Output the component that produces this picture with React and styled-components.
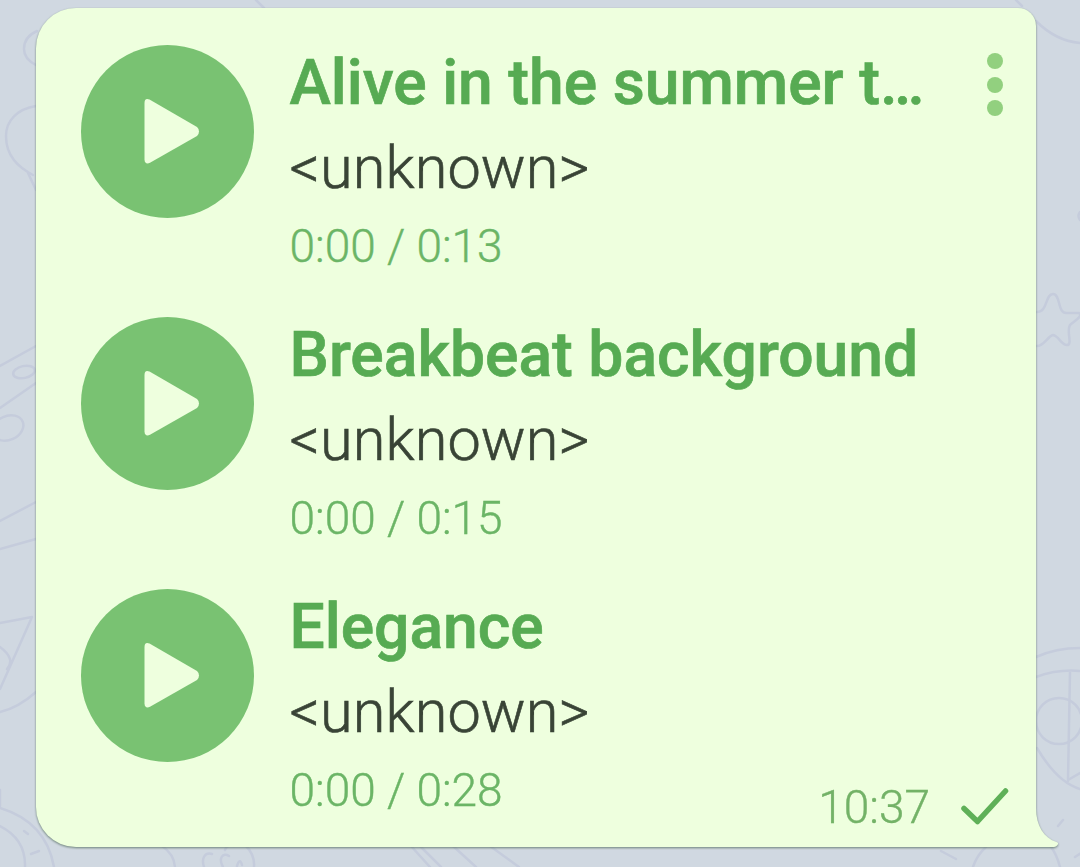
import React from "react";
import styled, { createGlobalStyle } from "styled-components";

const tracks = [
  { title: "Alive in the summer t…", artist: "<unknown>", time: "0:00 / 0:13" },
  { title: "Breakbeat background", artist: "<unknown>", time: "0:00 / 0:15" },
  { title: "Elegance", artist: "<unknown>", time: "0:00 / 0:28" },
];

const Wallpaper = () => (
  <WallpaperSvg viewBox="0 0 1080 867" aria-hidden="true">
    {/* left side */}
    <path d="M37 31c-9 4-13 10-13 18 0 6 4 12 12 16" />
    <path d="M36 106C17 109 6 121 6 136c0 20 12 31 27 39M28 173l8 17" />
    <path d="M0 366l36-20M0 408l36-25M0 521l36-19M0 549l36-10" />
    <ellipse cx="24" cy="372" rx="11" ry="6" transform="rotate(-12 24 372)" />
    <ellipse cx="8" cy="428" rx="16" ry="12" transform="rotate(-24 8 428)" />
    <path d="M0 623l32-6L0 689M0 647q16 12 7 22M0 712q18-4 36-20" />
    <path d="M0 808q46 14 54 59M0 826q26 13 25 41M0 806V790" />
    <path d="M24 831l4 3M31 854l8-3" />
    {/* top and right side */}
    <path d="M256 0l8 8M1016 0l6 6M1036 21q20 20 44 22" />
    <path d="M1080 212q-3 4 0 8" />
    <path d="M1037 312c11 0 8-18 16-18s4 20 14 19l12 0c4 3-3 7-9 12-4 6 3 20-3 20s-8-9-14-10c-5 1-9 11-16 11" />
    <path d="M1036 657q20-9 44-9M1036 677q22-8 44-6M1070 672l-2 109M1037 748q20 34 43 41M1068 780l12-7" />
    <circle cx="1059" cy="721" r="23" />
    <path d="M1058 826l5-6M1075 857l6-4" />
    {/* bottom edge */}
    <path d="M162 846q12 8 13 21M246 846q9 9 8 21M204 867c-3-9 1-15 8-13M223 867c-5-9 0-15 6-11M237 866q3-9 5-1M225 850q2-6 9-4" />
    <path d="M411 846l19 21M420 846l21 21M453 846l23 21M490 846l29 21" />
    <path d="M941 851l15 8M973 867q4-12 13-20M1051 847q6 8 9 20" />
  </WallpaperSvg>
);

const App = () => {
  return (
    <>
      <GlobalStyle />
      <Chat>
        <Wallpaper />
        <Bubble>
          {tracks.map((track) => (
            <Track key={track.title}>
              <PlayButton aria-label="Play">
                <svg width="173" height="173" viewBox="0 0 173 173">
                  <path d="M68.500 54.500Q63.500 52.500 63.500 58V114.500Q64 120 69 117.800L116 91Q118 89.500 118 86.500Q118 83.500 116 82Z" />
                </svg>
              </PlayButton>
              <Info>
                <Title>{track.title}</Title>
                <Artist>{track.artist}</Artist>
                <Time>{track.time}</Time>
              </Info>
            </Track>
          ))}
          <MenuButton aria-label="More">
            <Dot />
            <Dot />
            <Dot />
          </MenuButton>
          <Status>
            <span>10:37</span>
            <svg width="50" height="40" viewBox="0 0 50 40">
              <path d="M4 21.500L17.500 34.500L45.500 4" />
            </svg>
          </Status>
          <Tail viewBox="0 0 25 50">
            <path d="M0 0H1V10C1 28 9 40 21.500 44Q24 45 22.500 47Q21 49 19 49H0Z" />
          </Tail>
        </Bubble>
      </Chat>
    </>
  );
};

export default App;

const GlobalStyle = createGlobalStyle`
  * {
    box-sizing: border-box;
  }
  body {
    margin: 0;
    overflow: hidden;
    font-family: Roboto, "Liberation Sans", sans-serif;
  }
`;

const Chat = styled.div`
  position: relative;
  width: 1080px;
  height: 867px;
  padding: 8px 44px 20px 36px;
  background: #d0d8e1;
`;

const WallpaperSvg = styled.svg`
  position: absolute;
  inset: 0;
  width: 100%;
  height: 100%;
  fill: none;
  stroke: #c5ccdc;
  stroke-width: 2.5;
  stroke-linecap: round;
  stroke-linejoin: round;
`;

const Bubble = styled.div`
  position: relative;
  display: flex;
  flex-direction: column;
  height: 839px;
  padding: 37px 40px 0 45px;
  border-radius: 40px 18px 0 40px;
  background: #eeffde;
  filter: drop-shadow(0 1px 1px rgba(75, 100, 85, 0.75));
`;

const Track = styled.div`
  display: flex;
  flex: none;
  gap: 35.500px;
  height: 272px;
`;

const PlayButton = styled.button`
  flex: none;
  width: 173px;
  height: 173px;
  padding: 0;
  border: none;
  border-radius: 50%;
  background: #79c272;

  svg {
    display: block;
    fill: #eeffde;
  }
`;

const Info = styled.div`
  display: flex;
  flex-direction: column;
  padding-top: 2px;
  white-space: nowrap;
`;

const Title = styled.div`
  height: 86px;
  font-size: 62.4px;
  font-weight: 500;
  line-height: 72px;
  color: #57ab53;
  -webkit-text-stroke: 0.7px #57ab53;
`;

const Artist = styled.div`
  height: 86px;
  font-size: 59.4px;
  font-weight: 300;
  line-height: 70px;
  letter-spacing: 0.1px;
  color: #394436;
  -webkit-text-stroke: 0.6px #394436;
`;

const Time = styled.div`
  font-size: 46px;
  font-weight: 300;
  line-height: 54px;
  color: #6bb566;
  -webkit-text-stroke: 0.4px #6bb566;
`;

const MenuButton = styled.button`
  position: absolute;
  top: 45px;
  right: 33px;
  display: flex;
  flex-direction: column;
  gap: 7.5px;
  padding: 0;
  border: none;
  background: none;
`;

const Dot = styled.span`
  width: 16px;
  height: 16px;
  border-radius: 50%;
  background: #92d07f;
`;

const Status = styled.div`
  position: absolute;
  right: 26px;
  bottom: 13px;
  display: flex;
  align-items: center;
  gap: 30px;
  font-size: 46px;
  font-weight: 300;
  line-height: 54px;
  color: #73b267;
  -webkit-text-stroke: 0.4px #73b267;

  svg {
    fill: none;
    stroke: #5fb058;
    stroke-width: 5.5;
    stroke-linecap: round;
    stroke-linejoin: round;
  }
`;

const Tail = styled.svg`
  position: absolute;
  right: -24px;
  bottom: -1px;
  width: 25px;
  height: 50px;
  fill: #eeffde;
`;
